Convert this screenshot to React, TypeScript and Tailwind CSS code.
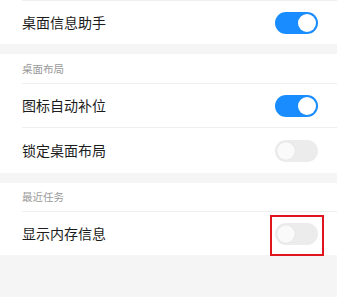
import React from "react";

type RowProps = {
  label: string;
  on?: boolean;
  marked?: boolean;
  divider?: boolean;
  className?: string;
};

const Toggle = ({ on }: { on?: boolean }) => (
  <div
    className={
      on
        ? "flex h-[22px] w-[43px] items-center justify-end rounded-full bg-[#198cff] px-[2px]"
        : "flex h-[22px] w-[43px] items-center justify-start rounded-full bg-[#ececec] px-[2px]"
    }
  >
    <div
      className={
        on
          ? "h-[18px] w-[18px] rounded-full bg-white"
          : "h-[18px] w-[18px] rounded-full bg-[#fafafa] shadow-[0_0_1px_rgba(0,0,0,0.15)]"
      }
    />
  </div>
);

const Row = ({ label, on, marked, divider, className }: RowProps) => (
  <div className="pl-[22px]">
    <div
      className={
        "flex items-center justify-between pr-[19px] " +
        (divider ? "border-b border-[#eeeeee] " : "") +
        (className ?? "")
      }
    >
      <span className="text-[14px] text-[#1c1c1c]">{label}</span>
      <div className="relative">
        <Toggle on={on} />
        {marked && (
          <div className="absolute -left-[5px] -top-[8px] h-[41px] w-[54px] border-2 border-[#e0141c]" />
        )}
      </div>
    </div>
  </div>
);

const Header = ({ title, className }: { title: string; className?: string }) => (
  <div className="pl-[22px]">
    <div className={"flex items-center border-b border-[#eeeeee] " + (className ?? "")}>
      <span className="text-[10.5px] text-[#9a9a9a]">{title}</span>
    </div>
  </div>
);

export default function App() {
  return (
    <div
      className="flex h-[297px] w-[337px] flex-col overflow-hidden bg-[#f5f5f5]"
      style={{ fontFamily: '"Noto Sans CJK SC", "Noto Sans", sans-serif' }}
    >
      <div className="bg-white">
        <div className="ml-[22px] h-px bg-[#f0f0f0]" />
        <Row label="桌面信息助手" on className="h-[43px]" />
      </div>

      <div className="mt-[10px] bg-white">
        <Header title="桌面布局" className="h-[30px]" />
        <Row label="图标自动补位" on divider className="h-[44px]" />
        <Row label="锁定桌面布局" className="h-[45px]" />
      </div>

      <div className="mt-[10px] bg-white">
        <Header title="最近任务" className="h-[29px]" />
        <Row label="显示内存信息" marked className="h-[43px]" />
      </div>
    </div>
  );
}
